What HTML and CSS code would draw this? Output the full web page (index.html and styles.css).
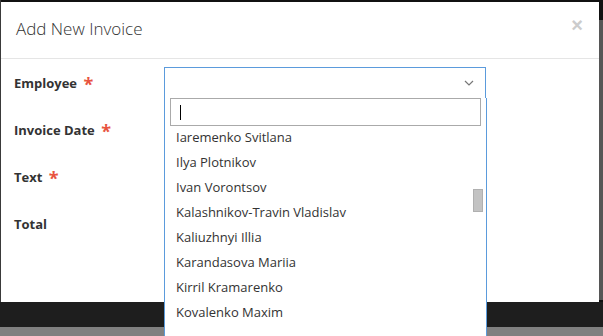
FILE: index.html
```html
<!DOCTYPE html>
<html lang="en">
<head>
  <meta charset="UTF-8">
  <title>Add New Invoice</title>
  <link rel="stylesheet" href="styles.css">
</head>
<body>
  <div class="page">
    <div class="modal">
      <div class="modal-header">
        <h4 class="modal-title">Add New Invoice</h4>
        <button class="close" type="button">&times;</button>
      </div>

      <div class="modal-body">
        <div class="form-row">
          <label class="form-label">Employee <span class="req">*</span></label>
          <div class="field">
            <div class="select open">
              <svg class="chevron" width="10" height="6" viewBox="0 0 10 6"><path d="M1 1l4 4 4-4" fill="none" stroke="#777" stroke-width="1.2"/></svg>
            </div>
            <!-- lista desplegable de empleados -->
            <div class="dropdown">
              <div class="search"><span class="caret"></span></div>
              <ul class="options">
                <li>Iaremenko Svitlana</li>
                <li>Ilya Plotnikov</li>
                <li>Ivan Vorontsov</li>
                <li>Kalashnikov-Travin Vladislav</li>
                <li>Kaliuzhnyi Illia</li>
                <li>Karandasova Mariia</li>
                <li>Kirril Kramarenko</li>
                <li>Kovalenko Maxim</li>
              </ul>
              <div class="scroll-thumb"></div>
            </div>
          </div>
        </div>

        <div class="form-row">
          <label class="form-label">Invoice Date <span class="req">*</span></label>
          <div class="field"></div>
        </div>

        <div class="form-row">
          <label class="form-label">Text <span class="req">*</span></label>
          <div class="field"></div>
        </div>

        <div class="form-row">
          <label class="form-label">Total</label>
          <div class="field"></div>
        </div>
      </div>
    </div>
    <div class="band"></div>
    <div class="strip"></div>
  </div>
</body>
</html>
```

FILE: styles.css
```css
/* fondo oscuro detrás del modal */
body {
  margin: 0;
  font-family: "Open Sans", "Liberation Sans", sans-serif;
  color: #333;
  background: #111;
  overflow: hidden;
}
.page {
  height: 336px;
  padding: 2px 4px 0 1px;
  box-sizing: border-box;
  background:
    linear-gradient(to bottom, transparent 20px, #565656 20px, #565656 300px, transparent 300px) right top / 4px 100% no-repeat,
    linear-gradient(to right, #3a3a3a 1px, transparent 1px);
}
.modal {
  height: 300px;
  background: #fff;
  position: relative;
}
.modal-header {
  height: 56px;
  border-bottom: 1px solid #e5e5e5;
  display: flex;
  align-items: center;
  justify-content: space-between;
  padding: 0 15px;
}
.modal-title {
  margin: 0;
  font-size: 17px;
  font-weight: 300;
  color: #333;
  padding-bottom: 3px;
}
.close {
  border: none;
  background: none;
  padding: 0;
  font-size: 20px;
  font-weight: bold;
  color: #ccc;
  line-height: 1;
  margin-bottom: 10px;
  margin-right: 1px;
}
.modal-body {
  padding: 8px 13px;
}
.form-row {
  display: flex;
  height: 32px;
  margin-bottom: 15px;
}
.form-label {
  width: 150px;
  font-size: 13px;
  font-weight: bold;
  line-height: 32px;
  color: #333;
}
.req {
  color: #e8543f;
  font-size: 18px;
  line-height: 0;
  margin-left: 3px;
  position: relative;
  top: 3px;
}
.field {
  width: 322px;
  position: relative;
}
.select {
  height: 32px;
  box-sizing: border-box;
  border: 1px solid #5b9bdc;
  display: flex;
  align-items: center;
  justify-content: flex-end;
  padding-right: 11px;
}
.chevron {
  display: block;
}
.dropdown {
  position: absolute;
  top: 31px;
  left: 0;
  width: 323px;
  height: 250px;
  box-sizing: border-box;
  background: #fff;
  border: 1px solid #5b9bdc;
  border-top: none;
  padding: 0 5px;
  z-index: 2;
}
.search {
  height: 28px;
  box-sizing: border-box;
  border: 1px solid #aaa;
  display: flex;
  align-items: center;
  padding-left: 9px;
}
.caret {
  width: 1px;
  height: 15px;
  background: #000;
}
.options {
  list-style: none;
  margin: 0;
  padding: 0;
}
.options li {
  height: 25px;
  line-height: 23px;
  padding: 0 6px;
  font-size: 13px;
  color: #333;
  white-space: nowrap;
}
.scroll-thumb {
  position: absolute;
  right: 3px;
  top: 91px;
  width: 10px;
  height: 23px;
  box-sizing: border-box;
  background: #c3c3c3;
  border: 1px solid #b0b0b0;
}
.band {
  height: 25px;
  margin: 0 -4px 0 -1px;
  background: #1e1e1e;
}
.strip {
  height: 9px;
  margin: 0 -4px 0 -1px;
  background: #808080;
}
```
